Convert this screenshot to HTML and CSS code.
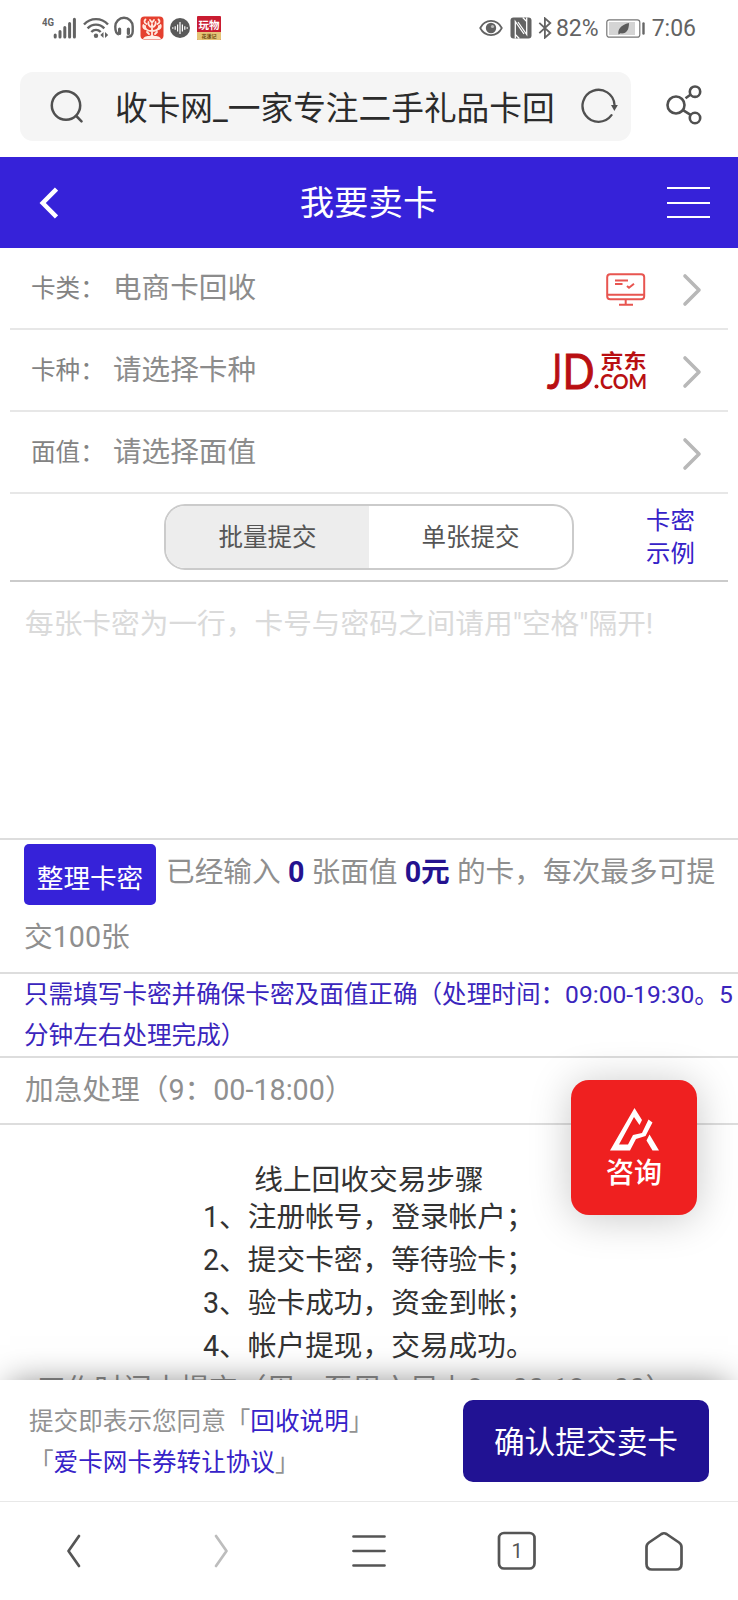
FILE: index.html
```html
<!DOCTYPE html>
<html lang="zh-CN">
<head>
<meta charset="utf-8">
<title>我要卖卡</title>
<link rel="stylesheet" href="styles.css">
</head>
<body>
<div class="phone">
  <div class="status">
    <div class="status-left">
      <svg class="signal" width="36" height="24" viewBox="0 0 36 24">
        <text x="0" y="10" class="net" textLength="12" lengthAdjust="spacingAndGlyphs">4G</text>
        <path d="M13.200 19v2M18 15.500v5.500M22.800 11.500v9.500M27.600 7.500v13.500M32.400 3.200v17.800" stroke="#636363" stroke-width="3" stroke-linecap="round"/>
      </svg>
      <svg class="wifi" width="26" height="24" viewBox="0 0 26 24" fill="none" stroke="#636363" stroke-width="2.400">
        <path d="M1 8.500C7.500 1.300 18.500 1.300 25 8.500M4.600 12.400c4.700-5 12-5 16.700 0M8.300 16c2.700-2.800 6.700-2.800 9.400 0"/>
        <circle cx="13" cy="19.700" r="2.200" fill="#636363" stroke="none"/>
        <path d="M20.500 16v6l-3.200-3zM22 16v6l3.200-3z" fill="#636363" stroke="none"/>
      </svg>
      <svg class="headset" width="20" height="24" viewBox="0 0 20 24" fill="none" stroke="#636363" stroke-width="2.400">
        <path d="M4.800 18.500C1 17.500 1.300 12 1.300 10.500a8.700 8.700 0 0 1 17.400 0v5c0 4-2.400 5.500-6.200 5.500"/>
        <path d="M5.600 13v4.500M14.400 13v4.500" stroke-width="3.200" stroke-linecap="round"/>
      </svg>
      <svg class="redapp" width="24" height="24" viewBox="0 0 24 24">
        <rect x=".5" y=".5" width="23" height="23" rx="4" fill="#e5402f"/>
        <g fill="none" stroke="#ffe9df" stroke-width="1.800" stroke-linecap="round">
          <path d="M12 8v12M12 15c-5 0-7-2-7-5M12 15c5 0 7-2 7-5M12 11C9 11 8 8 8.500 6M12 11c3 0 4-3 3.500-5M5 13c-2-1-2-3-1.500-4M19 13c2-1 2-3 1.500-4M6.500 8C4 7 4 5 5.500 3.500M17.500 8C20 7 20 5 18.500 3.500M10 4l1.500 2M14 4l-1.500 2M7 16l2 2M17 16l-2 2"/>
        </g>
        <path d="M3 23c2-4 5-2 9-4 4 2 7 0 9 4z" fill="#fff0e8"/>
      </svg>
      <svg class="audio" width="20" height="24" viewBox="0 0 20 24">
        <circle cx="10" cy="12" r="10" fill="#5a5a5a"/>
        <path d="M2.800 11.200v1.600M5.200 10.200v3.600M7.600 8.500v7M10 6v12M12.400 8.500v7M14.800 10.200v3.600M17.200 11.200v1.600" stroke="#fff" stroke-width="1.200"/>
      </svg>
      <svg class="toyapp" width="24" height="24" viewBox="0 0 24 24">
        <rect width="24" height="24" rx="1" fill="#c91c31"/>
        <path d="M0 16h24v7a1 1 0 0 1-1 1H1a1 1 0 0 1-1-1z" fill="#e4c477"/>
        <text x="12" y="13" text-anchor="middle" class="toy-a">玩物</text>
        <text x="12" y="22" text-anchor="middle" class="toy-b">花漾记</text>
      </svg>
    </div>
    <div class="status-right">
      <svg class="eye" width="24" height="22" viewBox="0 0 24 22">
        <path d="M1.200 11C6 1.500 18 1.500 22.800 11 18 20.500 6 20.500 1.200 11z" fill="none" stroke="#636363" stroke-width="1.700"/>
        <circle cx="12" cy="11" r="5.200" fill="#636363"/><circle cx="13.500" cy="9.500" r="1.600" fill="#bbb"/>
      </svg>
      <svg class="nfc" width="22" height="22" viewBox="0 0 22 22">
        <rect x=".5" y=".5" width="21" height="21" rx="3" fill="#636363"/>
        <path d="M5.300 21.500V4.500L14 17M16.700.500v17L8 5" fill="none" stroke="#fff" stroke-width="1.300"/>
        <path d="M5.300 17.500l4 4M12.700.500l4 4" stroke="#fff" stroke-width="1.200"/>
      </svg>
      <svg class="bt" width="14" height="22" viewBox="0 0 14 22" fill="none" stroke="#636363" stroke-width="1.800">
        <path d="M1.300 5.800l11 10.200-5.400 4.700V1.300L12.300 6l-11 10.200"/>
      </svg>
      <span class="pct">82%</span>
      <svg class="battery" width="39" height="19" viewBox="0 0 39 19">
        <rect x=".8" y=".8" width="33" height="17.400" rx="2.500" fill="#fff" stroke="#777" stroke-width="1.200"/>
        <rect x="3" y="3" width="26" height="13" fill="#d4d4d4"/>
        <path d="M12.500 15.500c-1-5 2-9.500 10.500-11.500 0 7-2.500 11-8.500 10.300z" fill="#5c5c5c"/>
        <path d="M37.500 4.500v10" stroke="#666" stroke-width="2.400" stroke-linecap="round"/>
      </svg>
      <span class="time">7:06</span>
    </div>
  </div>

  <div class="urlbar">
    <div class="search">
      <svg class="lens" width="34" height="34" viewBox="0 0 34 34" fill="none" stroke="#505050" stroke-width="2.500" stroke-linecap="round">
        <circle cx="16" cy="16.500" r="14.200"/><path d="M26.300 27l5.200 5.300"/>
      </svg>
      <span class="url">收卡网_一家专注二手礼品卡回</span>
      <svg class="reload" width="38" height="36" viewBox="0 0 38 36" fill="none" stroke="#505050" stroke-width="2.300">
        <path d="M34.500 16.800A16 16 0 1 0 31.500 27.200" stroke-linecap="round"/>
        <path d="M31 17h6.800l-3.400 6z" fill="#505050" stroke="none"/>
      </svg>
    </div>
    <svg class="share" width="36" height="40" viewBox="0 0 36 40" fill="none" stroke="#505050" stroke-width="2.600">
      <circle cx="10" cy="20" r="8.500"/><circle cx="29" cy="6.700" r="5.200"/><circle cx="29" cy="33" r="5.200"/>
      <path d="M19.500 13.200l5.300-3.700M17 25.200l8 5"/>
    </svg>
  </div>

  <header class="header">
    <svg class="back" width="22" height="32" viewBox="0 0 22 32" fill="none" stroke="#fff" stroke-width="4.500"><path d="M20.500 2L6.700 16l13.800 14"/></svg>
    <h1 class="title">我要卖卡</h1>
    <div class="burger"><i></i><i></i><i></i></div>
  </header>

  <main class="form">
    <div class="row">
      <span class="label">卡类：</span><span class="value">电商卡回收</span>
      <svg class="monitor" width="40" height="34" viewBox="0 0 40 34" fill="none" stroke="#e85550" stroke-width="2">
        <rect x="1.200" y="1.200" width="37" height="25" rx="3"/><path d="M1.200 21.700h37M19.700 26.500v5M13 31.800h14M9 7.500h13M9 11h7.500M21 13l2 1.800 5-4"/>
      </svg>
      <svg class="chev" width="20" height="34" viewBox="0 0 20 34"><path d="M3 3l14 14L3 31"/></svg>
    </div>
    <div class="row">
      <span class="label">卡种：</span><span class="value">请选择卡种</span>
      <svg class="jd" width="102" height="64" viewBox="0 -12 102 64">
        <text x="2" y="38" class="jd-big" textLength="15" lengthAdjust="spacingAndGlyphs">J</text>
        <text x="17.500" y="38" class="jd-big" textLength="32" lengthAdjust="spacingAndGlyphs">D</text>
        <circle cx="51.500" cy="35.500" r="2" fill="#b90f12"/>
        <text x="55.500" y="18" class="jd-cn" textLength="46" lengthAdjust="spacingAndGlyphs">京东</text>
        <text x="55" y="38" class="jd-com" textLength="47" lengthAdjust="spacingAndGlyphs">COM</text>
      </svg>
      <svg class="chev" width="20" height="34" viewBox="0 0 20 34"><path d="M3 3l14 14L3 31"/></svg>
    </div>
    <div class="row">
      <span class="label">面值：</span><span class="value">请选择面值</span>
      <svg class="chev" width="20" height="34" viewBox="0 0 20 34"><path d="M3 3l14 14L3 31"/></svg>
    </div>
    <div class="mode">
      <div class="toggle"><span class="tab active">批量提交</span><span class="tab">单张提交</span></div>
      <a class="example">卡密<br>示例</a>
    </div>
    <div class="entry">每张卡密为一行，卡号与密码之间请用"空格"隔开!</div>
    <div class="count"><span class="tidy">整理卡密</span>已经输入 <b>0</b> 张面值 <b>0元</b> 的卡，每次最多可提<br>交100张</div>
    <div class="tip">只需填写卡密并确保卡密及面值正确（处理时间：09:00-19:30。5<br>分钟左右处理完成）</div>
    <div class="urgent">加急处理（9：00-18:00）</div>
    <section class="steps">
      <h2 class="steps-title">线上回收交易步骤</h2>
      <ol class="steps-list">
        <li>1、注册帐号，登录帐户；</li>
        <li>2、提交卡密，等待验卡；</li>
        <li>3、验卡成功，资金到帐；</li>
        <li>4、帐户提现，交易成功。</li>
      </ol>
      <p class="hours">工作时间内提交（周一至周六早上9：00-18：00）</p>
    </section>
    <div class="consult">
      <svg width="49" height="44" viewBox="0 0 49 44" fill="#fff">
        <path d="M24.500 0L32 12l-2.500 5-5.500-8L9 36.500h9L23 27l9-2 6.500-13.500 4 3-7 13.500-9.500 3-6 11.500H0z"/>
        <path d="M39.500 26.500l9.500 16h-6.500l-6-10z"/>
      </svg>
      <span class="consult-text">咨询</span>
    </div>
  </main>

  <div class="submit">
    <div class="agree">提交即表示您同意「<a>回收说明</a>」<br>「<a>爱卡网卡券转让协议</a>」</div>
    <div class="confirm">确认提交卖卡</div>
  </div>

  <nav class="nav">
    <svg width="40" height="40" viewBox="0 0 40 40"><path d="M25 5L14.500 20 25 35"/></svg>
    <svg class="off" width="40" height="40" viewBox="0 0 40 40"><path d="M15 5l10.500 15L15 35"/></svg>
    <svg width="40" height="40" viewBox="0 0 40 40"><path d="M4.500 5.500h31M4.500 20h31M4.500 34.500h31"/></svg>
    <svg width="40" height="40" viewBox="0 0 40 40"><rect x="2" y="2" width="35.500" height="35.500" rx="5"/><text x="20" y="27" text-anchor="middle" class="tabs">1</text></svg>
    <svg width="40" height="40" viewBox="0 0 40 40"><path d="M17.500 3q2.500-1.500 5 0L35 11.500q2.500 1.700 2.500 4.500v17q0 5.500-5.500 5.500H8q-5.500 0-5.500-5.500V16q0-2.800 2.500-4.500z"/></svg>
  </nav>
</div>
</body>
</html>
```
FILE: styles.css
```css
* { box-sizing: border-box; }
body { margin: 0; background: #fff; font-family: Roboto, "Noto Sans CJK SC", sans-serif; }
svg { display: block; flex: none; }
.phone { width: 738px; height: 1600px; overflow: hidden; display: flex; flex-direction: column; }

.status { height: 56px; flex: none; display: flex; justify-content: space-between; padding: 0 42px 0 42px; }
.status-left, .status-right { display: flex; align-items: center; }
.status-left { gap: 6px; }
.wifi { margin-left: -1px; }
.headset { margin-left: -1px; }
.audio { margin-left: 0; }
.toyapp { margin-left: 1px; }
.net { font: 700 11.500px Roboto, sans-serif; fill: #636363; }
.toy-a { font: 700 10.500px "Noto Sans CJK SC", sans-serif; fill: #fff; }
.toy-b { font: 700 5px "Noto Sans CJK SC", sans-serif; fill: #6b4a12; }
.nfc { margin-left: 7px; }
.bt { margin-left: 6px; }
.pct, .time { font-size: 23px; line-height: 56px; color: #636363; padding-top: 1px; }
.pct { margin-left: 4px; }
.battery { margin-left: 7px; }
.time { margin-left: 7px; }

.urlbar { height: 101px; flex: none; display: flex; padding: 16px 0 0 20px; }
.search { width: 611px; height: 69px; border-radius: 13px; background: #f5f5f5; display: flex; align-items: center; padding-left: 30px; }
.lens { margin-top: -1px; }
.url { width: 440px; margin-left: 31px; padding-top: 5px; font-size: 32.700px; line-height: 69px; color: #2b2b2b; white-space: nowrap; }
.reload { margin-left: 25px; margin-top: -1px; }
.share { margin: 13px 0 0 35px; }

.header { height: 91px; flex: none; background: #3622d9; display: flex; align-items: center; justify-content: space-between; padding: 0 28px 0 36px; }
.title { margin: 0; padding-left: 12px; font-size: 34.400px; font-weight: 400; line-height: 88px; color: #fff; }
.burger { width: 43px; display: flex; flex-direction: column; gap: 12.500px; }
.burger i { height: 2px; background: #fff; }

.form { flex: 1; min-height: 0; position: relative; }
.row { height: 82px; margin: 0 10px; border-bottom: 2px solid #e7e7e7; display: flex; align-items: center; padding: 0 26px 0 21px; }
.label { width: 82px; font-size: 24.600px; line-height: 30px; color: #838383; padding-top: 2px; white-space: nowrap; }
.value { flex: 1; font-size: 28.600px; line-height: 34px; color: #8c8c8c; }
.chev { margin-left: 35px; margin-top: 3px; fill: none; stroke: #b8b8b8; stroke-width: 3.600; stroke-linecap: round; stroke-linejoin: round; }
.monitor { margin-top: 3px; margin-right: 1px; }
.jd { margin-top: 1px; overflow: visible; }
.jd-big { font: 400 49px Lato, sans-serif; fill: #b90f12; stroke: #b90f12; stroke-width: 1; }
.jd-cn { font: 700 20px "Noto Sans CJK SC", sans-serif; fill: #b90f12; }
.jd-com { font: 700 20px Lato, sans-serif; fill: #b90f12; }

.mode { height: 88px; margin: 0 10px; border-bottom: 2px solid #cbcbcb; display: flex; align-items: flex-start; padding: 10px 0 0 154px; }
.toggle { width: 410px; height: 66px; border: 2px solid #cbcbcb; border-radius: 21px; overflow: hidden; display: flex; }
.tab { flex: 1; text-align: center; font-size: 24.500px; line-height: 63px; color: #555; }
.active { background: #ededed; }
.example { margin-left: 72px; font-size: 24.400px; line-height: 33px; color: #3622c8; }
.entry { height: 258px; border-bottom: 2px solid #ddd; padding: 20px 0 0 25px; font-size: 28.700px; line-height: 44px; color: #dadada; white-space: nowrap; }
.count { height: 134px; border-bottom: 2px solid #ddd; padding-left: 24px; font-size: 28.700px; line-height: 65px; color: #8f8f8f; white-space: nowrap; }
.count b { color: #24128f; }
.tidy { display: inline-block; vertical-align: top; width: 132px; height: 61px; margin: 4px 10px 0 0; border-radius: 5px; background: #3622d9; color: #fff; font-size: 26.600px; line-height: 69px; text-align: center; }
.tip { height: 84px; border-bottom: 2px solid #ddd; padding-left: 24px; font-size: 24.600px; line-height: 41px; color: #3a25bd; white-space: nowrap; }
.urgent { height: 67px; border-bottom: 2px solid #ddd; padding-left: 25px; font-size: 28.700px; line-height: 64px; color: #8f8f8f; }
.steps { padding-top: 36px; color: #333; font-size: 28.700px; }
.steps-title { margin: 0; font-size: 28.700px; font-weight: 400; line-height: 38px; text-align: center; }
.steps-list { list-style: none; margin: -3px 0 0; padding: 0 0 0 203px; line-height: 43px; }
.hours { margin: 0; padding-left: 37px; line-height: 43px; color: #8f8f8f; white-space: nowrap; }

.consult { position: absolute; left: 571px; top: 832px; width: 126px; height: 135px; border-radius: 18px; background: #ef2020; box-shadow: 0 3px 42px rgba(0, 0, 0, .22); display: flex; flex-direction: column; align-items: center; padding-top: 28px; }
.consult-text { margin-top: 4px; font-size: 28px; font-weight: 500; line-height: 36px; color: #fff; }

.submit { height: 121px; flex: none; position: relative; background: #fff; box-shadow: 0 -6px 32px -10px rgba(0, 0, 0, .5); display: flex; align-items: flex-start; justify-content: space-between; padding: 20px 29px 0 29px; }
.agree { padding-top: 1px; font-size: 24.600px; line-height: 41px; color: #929292; white-space: nowrap; }
.agree a { color: #3622c8; }
.confirm { width: 246px; height: 82px; border-radius: 10px; background: #211293; color: #fff; font-size: 30.700px; line-height: 85px; text-align: center; }

.nav { height: 99px; flex: none; position: relative; background: #fff; border-top: 1px solid #e8e8e8; display: flex; align-items: center; justify-content: space-around; }
.nav svg { fill: none; stroke: #555; stroke-width: 2.700; stroke-linecap: round; stroke-linejoin: round; }
.nav .off { stroke: #bdbdbd; }
.nav .tabs { font: 400 20px Roboto, sans-serif; fill: #555; stroke: none; }
```
